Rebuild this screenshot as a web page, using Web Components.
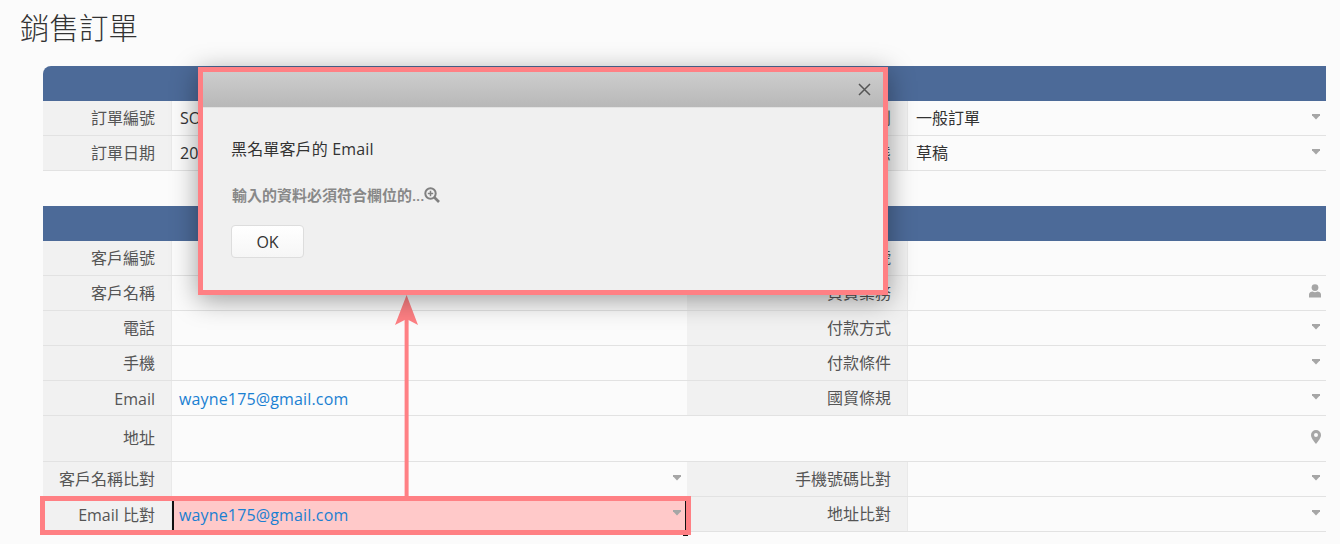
<!DOCTYPE html>
<html lang="zh-Hant">
<head>
<meta charset="utf-8">
<title>銷售訂單</title>
<style>
  html, body { margin: 0; height: 100%; overflow: hidden; }
  body {
    background: #fbfbfb;
    color: #333;
    font: 16px "Open Sans", "Noto Sans CJK TC", sans-serif;
  }
</style>
</head>
<body>
<order-page>
  <span slot="title">銷售訂單</span>

  <form-section first>
    <form-field label="訂單編號" value="SO"></form-field>
    <form-field right label="訂單類別" value="一般訂單" icon="caret"></form-field>
    <form-field label="訂單日期" value="20"></form-field>
    <form-field right label="訂單狀態" value="草稿" icon="caret"></form-field>
  </form-section>

  <form-section>
    <form-field label="客戶編號"></form-field>
    <form-field right label="客戶訂單號"></form-field>
    <form-field label="客戶名稱"></form-field>
    <form-field right label="負責業務" icon="user"></form-field>
    <form-field label="電話"></form-field>
    <form-field right label="付款方式" icon="caret"></form-field>
    <form-field label="手機"></form-field>
    <form-field right label="付款條件" icon="caret"></form-field>
    <form-field label="Email" value="wayne175@gmail.com" link></form-field>
    <form-field right label="國貿條規" icon="caret"></form-field>
    <form-field label="地址" icon="pin" wide></form-field>
    <form-field label="客戶名稱比對" icon="caret"></form-field>
    <form-field right label="手機號碼比對" icon="caret"></form-field>
    <form-field label="Email 比對" value="wayne175@gmail.com" link flagged icon="caret"></form-field>
    <form-field right label="地址比對" icon="caret"></form-field>
  </form-section>

  <row-highlight slot="overlay"></row-highlight>
  <callout-arrow slot="overlay"></callout-arrow>
  <alert-dialog slot="overlay" heading="黑名單客戶的 Email" message="輸入的資料必須符合欄位的..."></alert-dialog>
</order-page>

<script>
const ICONS = {
  caret: '<svg width="8" height="6" viewBox="0 0 8 6"><path d="M0 0h8v1.200L4 5.500 0 1.200z" fill="#a6a6a6"/></svg>',
  user: '<svg width="12" height="14" viewBox="0 0 12 14"><circle cx="6" cy="3.600" r="3.400" fill="#a6a6a6"/><path d="M0 13.500V10.600C0 8.600 2 7.800 3.600 7.600c1.400.7 3.400.7 4.800 0C10 7.800 12 8.600 12 10.600v2.900z" fill="#a6a6a6"/></svg>',
  pin: '<svg width="10" height="14" viewBox="0 0 10 14"><path fill-rule="evenodd" d="M5 0a5 5 0 0 1 5 5c0 3-3 6.500-5 9-2-2.500-5-6-5-9a5 5 0 0 1 5-5zm0 3a2 2 0 1 0 0 4 2 2 0 0 0 0-4z" fill="#a6a6a6"/></svg>'
};

class OrderPage extends HTMLElement {
  connectedCallback() {
    if (this.shadowRoot) return;
    const shadow = this.attachShadow({ mode: 'open' });
    shadow.innerHTML = `
      <style>
        :host { display: block; position: relative; height: 544px; }
        h1 {
          margin: 0;
          padding: 10px 0 0 20px;
          height: 56px;
          box-sizing: border-box;
          font-size: 29.500px;
          font-weight: 300;
          line-height: 36px;
          color: #333;
        }
        .sections { display: flex; flex-direction: column; gap: 35px; margin: 10px 14px 0 43px; }
      </style>
      <h1><slot name="title"></slot></h1>
      <div class="sections"><slot></slot></div>
      <slot name="overlay"></slot>
    `;
  }
}

class FormSection extends HTMLElement {
  connectedCallback() {
    if (this.shadowRoot) return;
    const shadow = this.attachShadow({ mode: 'open' });
    shadow.innerHTML = `
      <style>
        :host { display: block; }
        .band { height: 35px; background: #4c6a98; }
        :host([first]) .band { border-top-left-radius: 8px; }
        .grid { display: grid; grid-template-columns: 644px 639px; }
      </style>
      <div class="band"></div>
      <div class="grid"><slot></slot></div>
    `;
  }
}

class FormField extends HTMLElement {
  connectedCallback() {
    if (this.shadowRoot) return;
    const shadow = this.attachShadow({ mode: 'open' });
    const icon = this.getAttribute('icon');
    const value = this.getAttribute('value') || '';
    shadow.innerHTML = `
      <style>
        :host {
          display: grid;
          grid-template-columns: 129px 1fr;
          height: 35px;
          box-sizing: border-box;
          border-bottom: 1px solid #e2e2e2;
        }
        :host([right]) { grid-template-columns: 221px 1fr; }
        :host([wide]) { grid-column: 1 / -1; height: 46px; }
        .label {
          background: #f1f1f1;
          border-right: 1px solid #e9e9e9;
          padding-right: 16px;
          text-align: right;
          line-height: 35px;
          color: #555;
          white-space: nowrap;
          overflow: hidden;
        }
        :host([wide]) .label { line-height: 45px; }
        .value {
          position: relative;
          padding-left: 8px;
          line-height: 35px;
          color: #333;
          white-space: nowrap;
          overflow: hidden;
        }
        /* latin rows sit a pixel lower in the reference */
        :host([link]) .label, :host([link]) .value { line-height: 37px; }
        :host([link]) .value { color: #1a80d2; letter-spacing: .15px; padding-left: 7px; }
        :host([flagged]) .value { background: #ffc9c9; }
        svg { position: absolute; right: 5px; top: 12px; }
        :host([icon="caret"]) svg { right: 6px; top: 13px; }
        :host([icon="user"]) svg { top: 8px; }
        :host([icon="pin"]) svg { top: 14px; }
      </style>
      <div class="label"></div>
      <div class="value"><span></span>${icon ? ICONS[icon] : ''}</div>
    `;
    shadow.querySelector('.label').textContent = this.getAttribute('label');
    shadow.querySelector('.value span').textContent = value;
  }
}

class RowHighlight extends HTMLElement {
  connectedCallback() {
    if (this.shadowRoot) return;
    const shadow = this.attachShadow({ mode: 'open' });
    shadow.innerHTML = `
      <style>
        :host {
          position: absolute;
          left: 40px;
          top: 496px;
          width: 651px;
          height: 39px;
          box-sizing: border-box;
          border: 5px solid #ff8084;
          pointer-events: none;
        }
        .edge { position: absolute; left: 127px; right: 0; top: 0; bottom: 0; border-left: 2px solid #111; border-right: 1px solid #111; }
        .tick { position: absolute; right: -2px; bottom: -6px; width: 5px; height: 1px; background: #111; }
      </style>
      <div class="edge"></div>
      <div class="tick"></div>
    `;
  }
}

class CalloutArrow extends HTMLElement {
  connectedCallback() {
    if (this.shadowRoot) return;
    const shadow = this.attachShadow({ mode: 'open' });
    shadow.innerHTML = `
      <style>
        :host { position: absolute; left: 394px; top: 295px; width: 25px; height: 202px; }
        svg { display: block; }
      </style>
      <svg width="25" height="202" viewBox="0 0 25 202">
        <path d="M10.600 24h4v178h-4z" fill="#ff8084"/>
        <path d="M12.600 0 24 30 12.600 24 1 30z" fill="#ff8084"/>
      </svg>
    `;
  }
}

class AlertDialog extends HTMLElement {
  connectedCallback() {
    if (this.shadowRoot) return;
    const shadow = this.attachShadow({ mode: 'open' });
    shadow.innerHTML = `
      <style>
        :host {
          position: absolute;
          left: 198px;
          top: 67px;
          width: 690px;
          height: 228px;
          box-sizing: border-box;
          border: 5px solid #ff8084;
          background: #f0f0f0;
          box-shadow: 0 5px 25px rgba(0, 0, 0, .38);
          display: flex;
          flex-direction: column;
        }
        .bar {
          height: 36px;
          box-sizing: border-box;
          flex: none;
          background: linear-gradient(#cdcdcd, #b8b8b8);
          border-bottom: 1px solid #e2e2e2;
          display: flex;
          align-items: center;
          justify-content: flex-end;
          padding-right: 12px;
        }
        .body { padding: 29px 29px 0; display: flex; flex-direction: column; align-items: flex-start; }
        .heading { line-height: 24px; color: #333; margin-left: -1px; letter-spacing: .15px; }
        .msg {
          margin-top: 22px;
          display: flex;
          align-items: center;
          gap: 0;
          font-size: 15px;
          font-weight: 600;
          line-height: 24px;
          color: #888;
        }
        button {
          margin-top: 18px;
          margin-left: -1px;
          width: 73px;
          height: 33px;
          background: linear-gradient(#fff, #f6f6f6);
          border: 1px solid #ddd;
          border-radius: 4px;
          font: 16px "Open Sans", sans-serif;
          color: #333;
          padding: 0;
        }
      </style>
      <div class="bar">
        <svg width="13" height="13" viewBox="0 0 13 13"><path d="M1 1l11 11M12 1 1 12" stroke="#555" stroke-width="1.500"/></svg>
      </div>
      <div class="body">
        <div class="heading"></div>
        <div class="msg"><span></span>
          <svg width="16" height="16" viewBox="0 0 16 16" fill="none" stroke="#808080"><circle cx="6.500" cy="6.500" r="5.200" stroke-width="2"/><path d="M10.500 10.500 15 15" stroke-width="2.600"/><path d="M6.500 3.800v5.400M3.800 6.500h5.400" stroke-width="1.500"/></svg>
        </div>
        <button type="button">OK</button>
      </div>
    `;
    shadow.querySelector('.heading').textContent = this.getAttribute('heading');
    shadow.querySelector('.msg span').textContent = this.getAttribute('message');
  }
}

customElements.define('order-page', OrderPage);
customElements.define('form-section', FormSection);
customElements.define('form-field', FormField);
customElements.define('row-highlight', RowHighlight);
customElements.define('callout-arrow', CalloutArrow);
customElements.define('alert-dialog', AlertDialog);
</script>
</body>
</html>
